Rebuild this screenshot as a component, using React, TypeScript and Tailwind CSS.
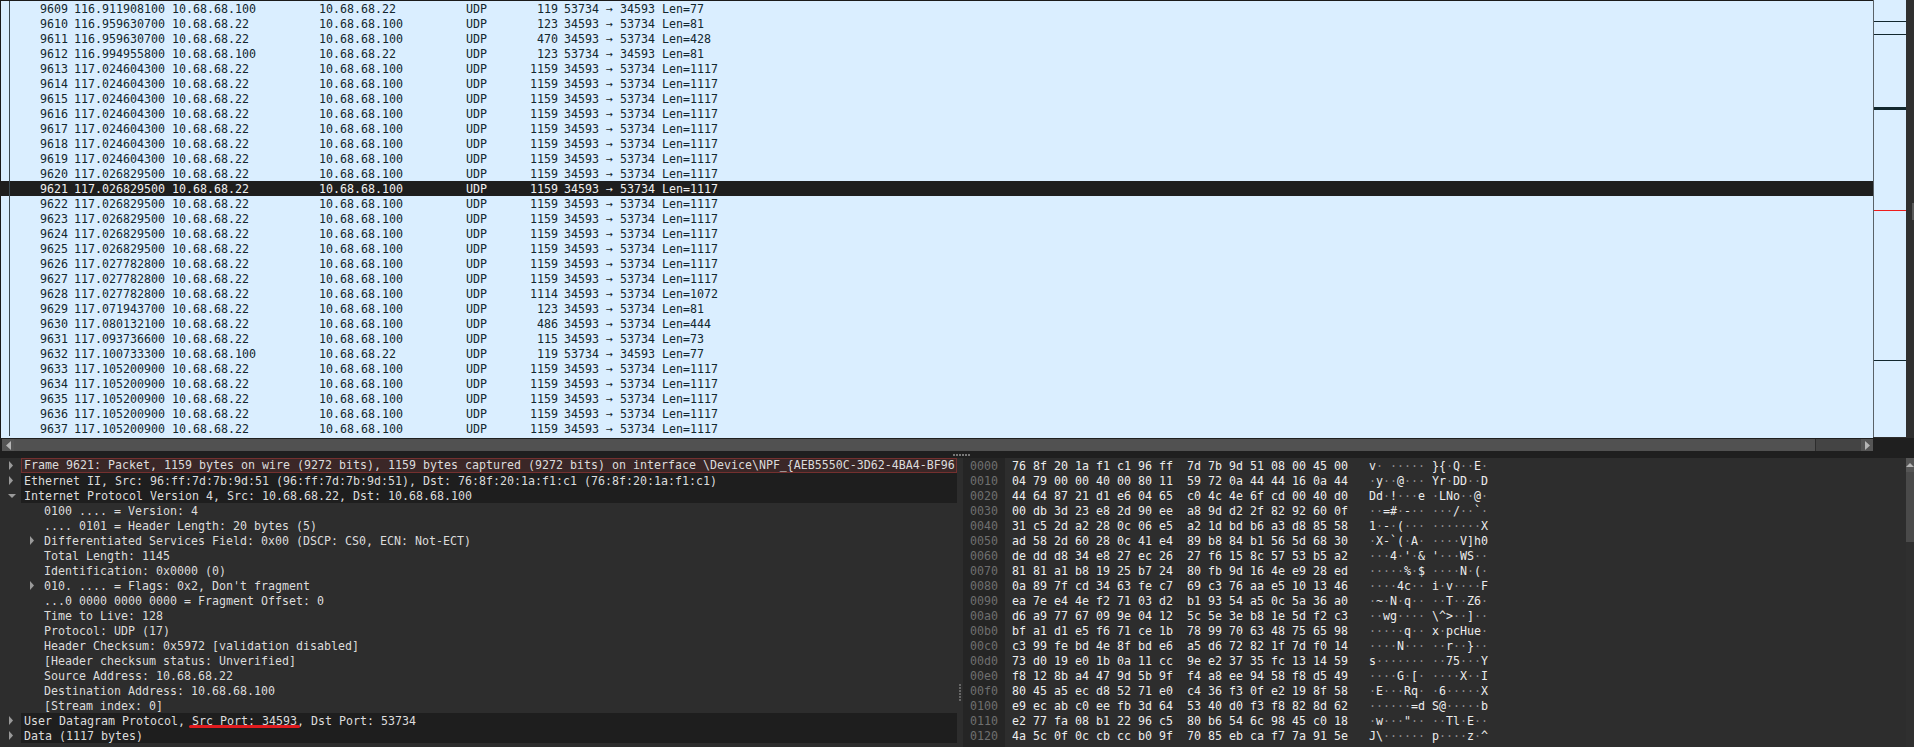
const mono = "font-['DejaVu_Sans_Mono',monospace] text-[11.63px] leading-[17px]";

type Packet = [number, string, boolean, number, number];

const packets: Packet[] = [
  [9609, "116.911908100", false, 119, 77],
  [9610, "116.959630700", true, 123, 81],
  [9611, "116.959630700", true, 470, 428],
  [9612, "116.994955800", false, 123, 81],
  [9613, "117.024604300", true, 1159, 1117],
  [9614, "117.024604300", true, 1159, 1117],
  [9615, "117.024604300", true, 1159, 1117],
  [9616, "117.024604300", true, 1159, 1117],
  [9617, "117.024604300", true, 1159, 1117],
  [9618, "117.024604300", true, 1159, 1117],
  [9619, "117.024604300", true, 1159, 1117],
  [9620, "117.026829500", true, 1159, 1117],
  [9621, "117.026829500", true, 1159, 1117],
  [9622, "117.026829500", true, 1159, 1117],
  [9623, "117.026829500", true, 1159, 1117],
  [9624, "117.026829500", true, 1159, 1117],
  [9625, "117.026829500", true, 1159, 1117],
  [9626, "117.027782800", true, 1159, 1117],
  [9627, "117.027782800", true, 1159, 1117],
  [9628, "117.027782800", true, 1114, 1072],
  [9629, "117.071943700", true, 123, 81],
  [9630, "117.080132100", true, 486, 444],
  [9631, "117.093736600", true, 115, 73],
  [9632, "117.100733300", false, 119, 77],
  [9633, "117.105200900", true, 1159, 1117],
  [9634, "117.105200900", true, 1159, 1117],
  [9635, "117.105200900", true, 1159, 1117],
  [9636, "117.105200900", true, 1159, 1117],
  [9637, "117.105200900", true, 1159, 1117],
];

const hexRows = [
  "76 8f 20 1a f1 c1 96 ff 7d 7b 9d 51 08 00 45 00",
  "04 79 00 00 40 00 80 11 59 72 0a 44 44 16 0a 44",
  "44 64 87 21 d1 e6 04 65 c0 4c 4e 6f cd 00 40 d0",
  "00 db 3d 23 e8 2d 90 ee a8 9d d2 2f 82 92 60 0f",
  "31 c5 2d a2 28 0c 06 e5 a2 1d bd b6 a3 d8 85 58",
  "ad 58 2d 60 28 0c 41 e4 89 b8 84 b1 56 5d 68 30",
  "de dd d8 34 e8 27 ec 26 27 f6 15 8c 57 53 b5 a2",
  "81 81 a1 b8 19 25 b7 24 80 fb 9d 16 4e e9 28 ed",
  "0a 89 7f cd 34 63 fe c7 69 c3 76 aa e5 10 13 46",
  "ea 7e e4 4e f2 71 03 d2 b1 93 54 a5 0c 5a 36 a0",
  "d6 a9 77 67 09 9e 04 12 5c 5e 3e b8 1e 5d f2 c3",
  "bf a1 d1 e5 f6 71 ce 1b 78 99 70 63 48 75 65 98",
  "c3 99 fe bd 4e 8f bd e6 a5 d6 72 82 1f 7d f0 14",
  "73 d0 19 e0 1b 0a 11 cc 9e e2 37 35 fc 13 14 59",
  "f8 12 8b a4 47 9d 5b 9f f4 a8 ee 94 58 f8 d5 49",
  "80 45 a5 ec d8 52 71 e0 c4 36 f3 0f e2 19 8f 58",
  "e9 ec ab c0 ee fb 3d 64 53 40 d0 f3 f8 82 8d 62",
  "e2 77 fa 08 b1 22 96 c5 80 b6 54 6c 98 45 c0 18",
  "4a 5c 0f 0c cb cc b0 9f 70 85 eb ca f7 7a 91 5e",
];

type Detail = { text: string; arrow?: "right" | "down"; child?: boolean; dark?: boolean; selected?: boolean };

const details: Detail[] = [
  {
    text: "Frame 9621: Packet, 1159 bytes on wire (9272 bits), 1159 bytes captured (9272 bits) on interface \\Device\\NPF_{AEB5550C-3D62-4BA4-BF96-",
    arrow: "right",
    selected: true,
  },
  { text: "Ethernet II, Src: 96:ff:7d:7b:9d:51 (96:ff:7d:7b:9d:51), Dst: 76:8f:20:1a:f1:c1 (76:8f:20:1a:f1:c1)", arrow: "right", dark: true },
  { text: "Internet Protocol Version 4, Src: 10.68.68.22, Dst: 10.68.68.100", arrow: "down", dark: true },
  { text: "0100 .... = Version: 4", child: true },
  { text: ".... 0101 = Header Length: 20 bytes (5)", child: true },
  { text: "Differentiated Services Field: 0x00 (DSCP: CS0, ECN: Not-ECT)", child: true, arrow: "right" },
  { text: "Total Length: 1145", child: true },
  { text: "Identification: 0x0000 (0)", child: true },
  { text: "010. .... = Flags: 0x2, Don't fragment", child: true, arrow: "right" },
  { text: "...0 0000 0000 0000 = Fragment Offset: 0", child: true },
  { text: "Time to Live: 128", child: true },
  { text: "Protocol: UDP (17)", child: true },
  { text: "Header Checksum: 0x5972 [validation disabled]", child: true },
  { text: "[Header checksum status: Unverified]", child: true },
  { text: "Source Address: 10.68.68.22", child: true },
  { text: "Destination Address: 10.68.68.100", child: true },
  { text: "[Stream index: 0]", child: true },
  { text: "User Datagram Protocol, Src Port: 34593, Dst Port: 53734", arrow: "right", dark: true },
  { text: "Data (1117 bytes)", arrow: "right", dark: true },
];

const AsciiCell = ({ hex }: { hex: string }) => {
  const code = parseInt(hex, 16);
  if (code >= 0x20 && code < 0x7f) return <span>{String.fromCharCode(code)}</span>;
  return <span className="text-[#8c8c8c]">·</span>;
};

const Arrow = ({ dir, className }: { dir: "right" | "down"; className?: string }) =>
  dir === "right" ? (
    <svg width="4" height="9" viewBox="0 0 4 9" className={className}>
      <path d="M0 0 L4 4.5 L0 9 Z" fill="#9a9a9a" />
    </svg>
  ) : (
    <svg width="8" height="4" viewBox="0 0 8 4" className={className}>
      <path d="M0 0 L8 0 L4 4 Z" fill="#9a9a9a" />
    </svg>
  );

const PacketRow = ({ packet }: { packet: Packet }) => {
  const [no, time, outgoing, length, payload] = packet;
  const selected = no === 9621;
  return (
    <div className={`flex h-[15px] whitespace-pre ${selected ? "bg-[#1e1e1e] text-[#f0f0f0]" : "text-[#12272e]"}`}>
      <div className="w-[10px] border-r border-[#3c4a52]" />
      <div className="w-[58px] text-right">{no}</div>
      <div className="w-[104px] pl-[6px]">{time}</div>
      <div className="w-[147px]">{outgoing ? "10.68.68.22" : "10.68.68.100"}</div>
      <div className="w-[147px]">{outgoing ? "10.68.68.100" : "10.68.68.22"}</div>
      <div className="w-[35px]">UDP</div>
      <div className="w-[57px] text-right">{length}</div>
      <div className="pl-[6px]">
        {outgoing ? "34593 → 53734" : "53734 → 34593"} Len={payload}
      </div>
    </div>
  );
};

const DetailRow = ({ row }: { row: Detail }) => (
  <div className="flex h-[15px] items-center">
    <div className="w-[21px] shrink-0">
      {row.arrow && !row.child && (
        <Arrow dir={row.arrow} className={row.arrow === "down" ? "ml-[8px]" : "ml-[9px]"} />
      )}
    </div>
    <div
      className={`relative h-[15px] min-w-0 flex-1 overflow-hidden whitespace-pre ${
        row.selected
          ? "border border-[#74302f] bg-[#3b2727] pl-[2px] leading-[13px]"
          : row.dark
            ? "bg-[#1e1e1e] pl-[3px]"
            : "pl-[23px]"
      }`}
    >
      {row.child && row.arrow && <Arrow dir={row.arrow} className="absolute top-[3px] left-[9px]" />}
      {row.text}
    </div>
  </div>
);

export default function App() {
  return (
    <div className={`flex h-[747px] w-[1914px] flex-col overflow-hidden bg-[#2d2d2d] ${mono}`}>
      {/* packet list */}
      <div className="flex h-[438px] shrink-0">
        <div className="w-[1873px] border-t border-l border-[#1a1a1a] bg-[#daeeff]">
          <div className="-ml-px">
            {packets.map((p) => (
              <PacketRow key={p[0]} packet={p} />
            ))}
          </div>
        </div>
        <div className="relative h-[437px] w-[33px] border-l border-[#5a6268] bg-[#daeeff]">
          <div className="absolute top-[21px] h-px w-full bg-[#12272e]" />
          <div className="absolute top-[34px] h-px w-full bg-[#12272e]" />
          <div className="absolute top-[107px] h-[3px] w-full bg-[#12272e]" />
          <div className="absolute top-[210px] h-px w-full bg-[#ee1c1c]" />
          <div className="absolute top-[360px] h-px w-full bg-[#12272e]" />
        </div>
        <div className="relative flex-1 bg-[#2f2f2f]">
          <div className="absolute top-[203px] right-0 h-[17px] w-[2px] bg-[#5a5a5a]" />
        </div>
      </div>

      {/* horizontal scrollbar */}
      <div className="flex h-[14px] shrink-0 items-center bg-[#1f1f1f]">
        <div className="flex h-[14px] w-[1873px] items-center pl-[2px]">
          <div className="flex h-[12px] w-[12px] items-center justify-center bg-[#555555]">
            <svg width="5" height="9" viewBox="0 0 5 9">
              <path d="M5 0 L0 4.5 L5 9 Z" fill="#b5b5b5" />
            </svg>
          </div>
          <div className="h-[12px] flex-1 border-r border-[#2d2d2d] bg-[#515151]" />
          <div className="h-[12px] w-[45px] bg-[#444444]" />
          <div className="flex h-[12px] w-[12px] items-center justify-center bg-[#555555]">
            <svg width="5" height="9" viewBox="0 0 5 9">
              <path d="M0 0 L5 4.5 L0 9 Z" fill="#b5b5b5" />
            </svg>
          </div>
        </div>
      </div>

      {/* splitter */}
      <div className="flex h-[6px] shrink-0 items-center justify-start bg-[#1f1f1f] pl-[953px]">
        <div className="h-[2px] w-[17px] bg-[repeating-linear-gradient(90deg,#777777_0_2px,transparent_2px_3px)]" />
      </div>

      {/* details and bytes */}
      <div className="relative flex min-h-0 flex-1">
        <div className="relative w-[957px] shrink-0 text-[#dcdcdc]">
          {details.map((row, i) => (
            <DetailRow key={i} row={row} />
          ))}
          <div className="absolute top-[267px] left-[189px] h-[3px] w-[111px] rounded-full bg-[#e01b1f]" />
        </div>

        <div className="flex w-[6px] shrink-0 items-center justify-center">
          <div className="mt-[180px] h-[17px] w-[2px] bg-[repeating-linear-gradient(0deg,#666666_0_2px,transparent_2px_3px)]" />
        </div>

        <div className="w-[42px] shrink-0 bg-[#252525] pl-[7px] text-[#6f6f6f]">
          {hexRows.map((_, i) => (
            <div key={i} className="h-[15px]">
              {(i * 16).toString(16).padStart(4, "0")}
            </div>
          ))}
        </div>

        <div className="flex-1 pl-[7px] whitespace-pre text-[#ececec]">
          {hexRows.map((row, i) => {
            const bytes = row.split(" ");
            return (
              <div key={i} className="flex h-[15px]">
                <span className="w-[357px]">
                  {row.slice(0, 23)}  {row.slice(24)}
                </span>
                <span>
                  {bytes.slice(0, 8).map((b, j) => (
                    <AsciiCell key={j} hex={b} />
                  ))}{" "}
                  {bytes.slice(8).map((b, j) => (
                    <AsciiCell key={j} hex={b} />
                  ))}
                </span>
              </div>
            );
          })}
        </div>

        <div className="w-[8px] shrink-0 bg-[#2f2f2f]">
          <div className="flex h-[14px] items-center justify-center bg-[#555555]">
            <svg width="8" height="4" viewBox="0 0 8 4">
              <path d="M0 4 L4 0 L8 4 Z" fill="#b5b5b5" />
            </svg>
          </div>
          <div className="h-[70px] bg-[#4a4a4a]" />
        </div>
      </div>
    </div>
  );
}
